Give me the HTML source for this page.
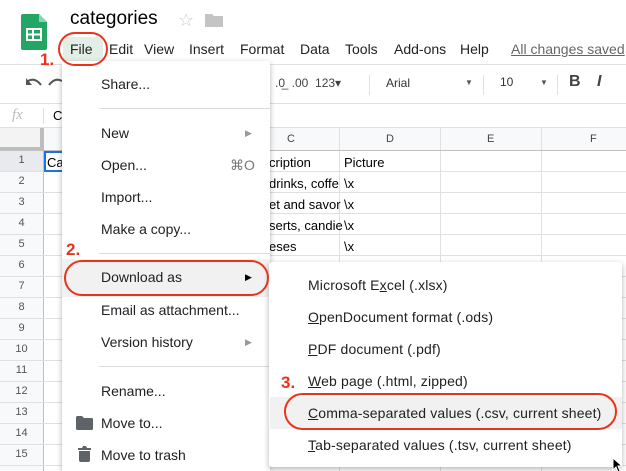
<!DOCTYPE html>
<html><head><meta charset="utf-8"><style>
*{margin:0;padding:0;box-sizing:border-box}
html,body{width:626px;height:471px;overflow:hidden}
body{background:#fff;font-family:"Liberation Sans",Arial,sans-serif;position:relative;color:#222}
.a{position:absolute;white-space:nowrap}
.hl{position:absolute;background:#e0e0e0}
.vl{position:absolute;background:#e0e0e0}
.menu{position:absolute;background:#fff;box-shadow:0 2px 6px rgba(0,0,0,.3);border-radius:3px}
.mi{position:absolute;font-size:14px;color:#202124}
.sm{letter-spacing:.15px}
.sep{position:absolute;height:1px;background:#dadce0}
.oval{position:absolute;border:2.5px solid #e8341c;border-radius:20px}
.num{position:absolute;color:#e8341c;font-weight:bold;font-size:17px}
u{text-decoration:underline}
</style></head><body>
<svg class="a" style="left:21px;top:14px" width="26" height="36" viewBox="0 0 26 36"><path d="M0 2Q0 0 2 0H18L26 8V34Q26 36 24 36H2Q0 36 0 34Z" fill="#23a566"/><path d="M18 0V8H26Z" fill="#8ed1b1"/><rect x="6" y="15" width="14" height="11" fill="none" stroke="#fff" stroke-width="2"/><line x1="6" y1="20.5" x2="20" y2="20.5" stroke="#fff" stroke-width="2"/><line x1="12" y1="15" x2="12" y2="26" stroke="#fff" stroke-width="2"/></svg>
<div class="a" style="left:70px;top:8px;font-size:19px;color:#000">categories</div>
<div class="a" style="left:178px;top:10px;font-size:18px;color:#ccc">☆</div>
<svg class="a" style="left:205px;top:13px" width="18" height="14"><path d="M0 1H7L9 3H18V14H0Z" fill="#c4c4c4"/></svg>
<div class="a" style="left:63px;top:37px;width:40px;height:25px;background:#e3efe6;border-radius:4px"></div>
<div class="a" style="left:70px;top:41px;font-size:14px;color:#222">File</div>
<div class="a" style="left:109px;top:41px;font-size:14px;color:#222">Edit</div>
<div class="a" style="left:144px;top:41px;font-size:14px">View</div>
<div class="a" style="left:189px;top:41px;font-size:14px">Insert</div>
<div class="a" style="left:240px;top:41px;font-size:14px">Format</div>
<div class="a" style="left:300px;top:41px;font-size:14px">Data</div>
<div class="a" style="left:345px;top:41px;font-size:14px">Tools</div>
<div class="a" style="left:394px;top:41px;font-size:14px">Add-ons</div>
<div class="a" style="left:460px;top:41px;font-size:14px">Help</div>
<div class="a" style="left:511px;top:41px;font-size:14px;color:#666;text-decoration:underline">All changes saved</div>
<div class="hl" style="left:0;top:64px;width:626px;height:1px"></div>
<div class="hl" style="left:0;top:103px;width:626px;height:1px"></div>
<svg class="a" style="left:25px;top:77px" width="40" height="14"><path d="M3 4Q10 0 16 8" fill="none" stroke="#555" stroke-width="2"/><path d="M1 1V8H7Z" fill="#555"/><path d="M37 4Q30 0 24 8" fill="none" stroke="#555" stroke-width="2"/></svg>
<div class="a" style="left:275px;top:76px;font-size:12px;color:#444">.0̲ &nbsp;.00 &nbsp;123▾</div>
<div class="vl" style="left:369px;top:75px;width:1px;height:20px"></div>
<div class="a" style="left:386px;top:76px;font-size:12px;color:#333">Arial</div>
<div class="a" style="left:465px;top:78px;font-size:8px;color:#555">▼</div>
<div class="vl" style="left:483px;top:75px;width:1px;height:20px"></div>
<div class="a" style="left:500px;top:75px;font-size:12px;color:#333">10</div>
<div class="a" style="left:540px;top:78px;font-size:8px;color:#555">▼</div>
<div class="vl" style="left:557px;top:75px;width:1px;height:20px"></div>
<div class="a" style="left:569px;top:73px;font-size:16px;font-weight:bold;color:#444">B</div>
<div class="a" style="left:597px;top:73px;font-size:16px;font-style:italic;font-weight:bold;color:#444">I</div>
<div class="a" style="left:12px;top:107px;font-size:15px;font-style:italic;color:#bbb;font-family:'Liberation Serif',serif">fx</div>
<div class="vl" style="left:43px;top:108px;width:1px;height:16px"></div>
<div class="a" style="left:53px;top:108px;font-size:13px;color:#000">C</div>
<div class="hl" style="left:0;top:127px;width:626px;height:1px"></div>
<div class="a" style="left:0;top:128px;width:626px;height:22px;background:#f8f9fa"></div>
<div class="a" style="left:0;top:128px;width:43px;height:343px;background:#f8f9fa"></div>
<div class="a" style="left:0;top:128px;width:43px;height:22px;background:#f3f3f3"></div>
<div class="a" style="left:40px;top:128px;width:4px;height:22px;background:#bdbdbd"></div>
<div class="a" style="left:0;top:147px;width:43px;height:3px;background:#bdbdbd"></div>
<div class="a" style="left:0;top:150px;width:43px;height:22px;background:#e8eaed"></div>
<div id="g"></div>
<div class="a" style="left:287px;top:133px;font-size:11px;color:#444">C</div>
<div class="a" style="left:386px;top:133px;font-size:11px;color:#444">D</div>
<div class="a" style="left:487px;top:133px;font-size:11px;color:#444">E</div>
<div class="a" style="left:590px;top:133px;font-size:11px;color:#444">F</div>
<div class="a" style="left:44px;top:151px;width:30px;height:21px;border:2px solid #1a73e8;border-right:none"></div>
<div class="a" style="left:47px;top:155px;font-size:13px;color:#000">Ca</div>
<div class="a" style="left:269px;top:155px;font-size:13px;color:#000">cription</div>
<div class="a" style="left:269px;top:176px;font-size:13px;color:#000">drinks, coffe</div>
<div class="a" style="left:269px;top:197px;font-size:13px;color:#000">et and savor</div>
<div class="a" style="left:269px;top:218px;font-size:13px;color:#000">serts, candie</div>
<div class="a" style="left:269px;top:239px;font-size:13px;color:#000">eses</div>
<div class="a" style="left:344px;top:155px;font-size:13px;color:#000">Picture</div>
<div class="a" style="left:344px;top:176px;font-size:13px;color:#000">\x</div>
<div class="a" style="left:344px;top:197px;font-size:13px;color:#000">\x</div>
<div class="a" style="left:344px;top:218px;font-size:13px;color:#000">\x</div>
<div class="a" style="left:344px;top:239px;font-size:13px;color:#000">\x</div>
<script>
var h='';
[43,339,440,541].forEach(function(x){h+='<div class="vl" style="left:'+x+'px;top:128px;width:1px;height:343px"></div>'});
h+='<div class="vl" style="left:43px;top:128px;width:1px;height:343px;background:#c0c0c0"></div>';
for(var i=0;i<15;i++){var y=150+i*21;
h+='<div class="hl" style="left:0;top:'+(y+21)+'px;width:626px;height:1px"></div>';
h+='<div class="a" style="left:0;width:43px;text-align:center;top:'+(y+4)+'px;font-size:11px;color:#555">'+(i+1)+'</div>';}
h+='<div class="hl" style="left:0;top:150px;width:626px;height:1px;background:#c0c0c0"></div>';
document.getElementById('g').innerHTML=h;
</script>
<div class="menu" style="left:62px;top:61px;width:208px;height:410px;border-radius:3px 3px 0 0"></div>
<div class="mi" style="left:101px;top:76px">Share...</div>
<div class="sep" style="left:99px;top:108px;width:171px"></div>
<div class="mi" style="left:101px;top:125px">New</div><div class="a" style="left:245px;top:128px;font-size:9px;color:#999">▶</div>
<div class="mi" style="left:101px;top:157px">Open...</div><div class="mi" style="left:230px;top:157px;color:#777">⌘O</div>
<div class="mi" style="left:101px;top:189px">Import...</div>
<div class="mi" style="left:101px;top:221px">Make a copy...</div>
<div class="sep" style="left:99px;top:253px;width:171px"></div>
<div class="a" style="left:62px;top:259px;width:208px;height:38px;background:#f1f1f1"></div>
<div class="mi" style="left:101px;top:269px">Download as</div><div class="a" style="left:245px;top:272px;font-size:9px;color:#000">▶</div>
<div class="mi" style="left:101px;top:302px">Email as attachment...</div>
<div class="mi" style="left:101px;top:334px">Version history</div><div class="a" style="left:245px;top:337px;font-size:9px;color:#999">▶</div>
<div class="sep" style="left:99px;top:366px;width:171px"></div>
<div class="mi" style="left:101px;top:383px">Rename...</div>
<svg class="a" style="left:76px;top:416px" width="17" height="14"><path d="M0 1.5Q0 0 1.5 0H6L8 2H15.5Q17 2 17 3.5V12.5Q17 14 15.5 14H1.5Q0 14 0 12.5Z" fill="#5f6368"/></svg>
<div class="mi" style="left:101px;top:415px">Move to...</div>
<svg class="a" style="left:78px;top:446px" width="13" height="16"><path d="M0 2H4L5 0H8L9 2H13V4H0Z M1 5H12V14Q12 16 10 16H3Q1 16 1 14Z" fill="#5f6368"/></svg>
<div class="mi" style="left:101px;top:447px">Move to trash</div>
<div class="menu" style="left:269px;top:262px;width:353px;height:205px"></div>
<div class="mi sm" style="left:308px;top:277px">Microsoft E<u>x</u>cel (.xlsx)</div>
<div class="mi sm" style="left:308px;top:309px"><u>O</u>penDocument format (.ods)</div>
<div class="mi sm" style="left:308px;top:341px"><u>P</u>DF document (.pdf)</div>
<div class="mi sm" style="left:308px;top:373px"><u>W</u>eb page (.html, zipped)</div>
<div class="a" style="left:270px;top:397px;width:352px;height:32px;background:#f1f1f1"></div>
<div class="mi sm" style="left:308px;top:405px"><u>C</u>omma-separated values (.csv, current sheet)</div>
<div class="mi sm" style="left:308px;top:437px"><u>T</u>ab-separated values (.tsv, current sheet)</div>
<div class="oval" style="left:58px;top:32px;width:50px;height:34px"></div>
<div class="num" style="left:40px;top:50px">1.</div>
<div class="oval" style="left:64px;top:260px;width:205px;height:36px"></div>
<div class="num" style="left:66px;top:240px">2.</div>
<div class="oval" style="left:284px;top:393px;width:333px;height:37px"></div>
<div class="num" style="left:281px;top:373px">3.</div>
<svg class="a" style="left:612px;top:458px" width="12" height="14"><path d="M1 0V12L4 9L6 14L8 13L6 8H10Z" fill="#000" stroke="#fff" stroke-width="1"/></svg>
</body></html>
